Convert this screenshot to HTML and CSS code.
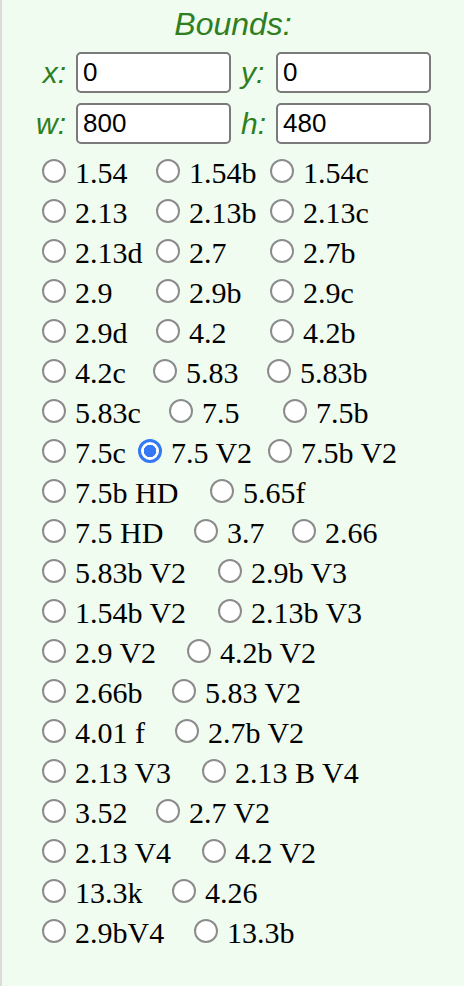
FILE: index.html
```html
<!DOCTYPE html>
<html lang="en">
    <head>
        <meta charset="UTF-8">
        <meta name="viewport" content="width=device-width, initial-scale=1.0">
        <title>Bounds</title>
        <link rel="stylesheet" href="styles.css">
    </head>
    <body>
        <div id="panel">
            <div id="title">Bounds:</div>
            <!-- bounds inputs -->
            <div id="bounds">
                <label for="bx" class="lbl">x:</label>
                <input type="text" id="bx" class="num" value="0">
                <label for="by" class="lbl">y:</label>
                <input type="text" id="by" class="num" value="0">
                <label for="bw" class="lbl">w:</label>
                <input type="text" id="bw" class="num" value="800">
                <label for="bh" class="lbl">h:</label>
                <input type="text" id="bh" class="num" value="480">
            </div>

            <!-- display list -->
            <div id="devs">
                <div class="row">
                    <label class="opt w114"><input type="radio" name="dev">1.54</label>
                    <label class="opt w114"><input type="radio" name="dev">1.54b</label>
                    <label class="opt"><input type="radio" name="dev">1.54c</label>
                </div>
                <div class="row">
                    <label class="opt w114"><input type="radio" name="dev">2.13</label>
                    <label class="opt w114"><input type="radio" name="dev">2.13b</label>
                    <label class="opt"><input type="radio" name="dev">2.13c</label>
                </div>
                <div class="row">
                    <label class="opt w114"><input type="radio" name="dev">2.13d</label>
                    <label class="opt w114"><input type="radio" name="dev">2.7</label>
                    <label class="opt"><input type="radio" name="dev">2.7b</label>
                </div>
                <div class="row">
                    <label class="opt w114"><input type="radio" name="dev">2.9</label>
                    <label class="opt w114"><input type="radio" name="dev">2.9b</label>
                    <label class="opt"><input type="radio" name="dev">2.9c</label>
                </div>
                <div class="row">
                    <label class="opt w114"><input type="radio" name="dev">2.9d</label>
                    <label class="opt w114"><input type="radio" name="dev">4.2</label>
                    <label class="opt"><input type="radio" name="dev">4.2b</label>
                </div>
                <div class="row">
                    <label class="opt w111"><input type="radio" name="dev">4.2c</label>
                    <label class="opt w114"><input type="radio" name="dev">5.83</label>
                    <label class="opt"><input type="radio" name="dev">5.83b</label>
                </div>
                <div class="row">
                    <label class="opt w127"><input type="radio" name="dev">5.83c</label>
                    <label class="opt w114"><input type="radio" name="dev">7.5</label>
                    <label class="opt"><input type="radio" name="dev">7.5b</label>
                </div>
                <div class="row">
                    <label class="opt w96"><input type="radio" name="dev">7.5c</label>
                    <label class="opt w130"><input type="radio" name="dev" checked>7.5 V2</label>
                    <label class="opt"><input type="radio" name="dev">7.5b V2</label>
                </div>
                <div class="row">
                    <label class="opt w168"><input type="radio" name="dev">7.5b HD</label>
                    <label class="opt"><input type="radio" name="dev">5.65f</label>
                </div>
                <div class="row">
                    <label class="opt w152"><input type="radio" name="dev">7.5 HD</label>
                    <label class="opt w98"><input type="radio" name="dev">3.7</label>
                    <label class="opt"><input type="radio" name="dev">2.66</label>
                </div>
                <div class="row">
                    <label class="opt w176"><input type="radio" name="dev">5.83b V2</label>
                    <label class="opt"><input type="radio" name="dev">2.9b V3</label>
                </div>
                <div class="row">
                    <label class="opt w176"><input type="radio" name="dev">1.54b V2</label>
                    <label class="opt"><input type="radio" name="dev">2.13b V3</label>
                </div>
                <div class="row">
                    <label class="opt w145"><input type="radio" name="dev">2.9 V2</label>
                    <label class="opt"><input type="radio" name="dev">4.2b V2</label>
                </div>
                <div class="row">
                    <label class="opt w130"><input type="radio" name="dev">2.66b</label>
                    <label class="opt"><input type="radio" name="dev">5.83 V2</label>
                </div>
                <div class="row">
                    <label class="opt w133"><input type="radio" name="dev">4.01 f</label>
                    <label class="opt"><input type="radio" name="dev">2.7b V2</label>
                </div>
                <div class="row">
                    <label class="opt w160"><input type="radio" name="dev">2.13 V3</label>
                    <label class="opt"><input type="radio" name="dev">2.13 B V4</label>
                </div>
                <div class="row">
                    <label class="opt w114"><input type="radio" name="dev">3.52</label>
                    <label class="opt"><input type="radio" name="dev">2.7 V2</label>
                </div>
                <div class="row">
                    <label class="opt w160"><input type="radio" name="dev">2.13 V4</label>
                    <label class="opt"><input type="radio" name="dev">4.2 V2</label>
                </div>
                <div class="row">
                    <label class="opt w130"><input type="radio" name="dev">13.3k</label>
                    <label class="opt"><input type="radio" name="dev">4.26</label>
                </div>
                <div class="row">
                    <label class="opt w152"><input type="radio" name="dev">2.9bV4</label>
                    <label class="opt"><input type="radio" name="dev">13.3b</label>
                </div>
            </div>
        </div>
    </body>
</html>
```

FILE: styles.css
```css
body {
    margin: 0;
    font-family: "Liberation Serif", "Times New Roman", serif;
}

#panel {
    min-height: 986px;
    box-sizing: border-box;
    background-color: #f0fcf0;
    border-left: 2px solid #dcdcdc;
}

#title {
    padding-top: 4px;
    height: 44px;
    line-height: 40px;
    text-align: center;
    font-family: "Liberation Sans", Arial, sans-serif;
    font-style: italic;
    font-size: 32px;
    color: #2f7f22;
    box-sizing: border-box;
}

#bounds {
    margin: 8px 0 0 34px;
    display: grid;
    grid-template-columns: 30px 155px 25px 155px;
    grid-auto-rows: 41px;
    column-gap: 10px;
    row-gap: 10px;
    align-items: center;
}

.lbl {
    font-family: "Liberation Sans", Arial, sans-serif;
    font-style: italic;
    font-size: 30px;
    line-height: 41px;
    color: #2f7f22;
    text-align: right;
}

.lbl:nth-of-type(even) {
    text-align: left;
}

.num {
    box-sizing: border-box;
    width: 155px;
    height: 41px;
    margin: 0;
    padding: 0 5px;
    font-family: "Liberation Sans", Arial, sans-serif;
    font-size: 26px;
    color: #000;
    background-color: #fff;
    border: 2px solid #7a7a7a;
    border-radius: 5px;
}

#devs {
    margin-top: 9px;
    padding-left: 40px;
}

.row {
    display: flex;
    height: 40px;
    white-space: nowrap;
}

.opt {
    display: block;
    font-size: 30px;
    line-height: 40px;
    color: #000;
}

.opt input {
    -webkit-appearance: none;
    appearance: none;
    box-sizing: border-box;
    width: 24px;
    height: 24px;
    margin: 0 9px 0 0;
    border: 2px solid #8c8c8c;
    border-radius: 50%;
    background-color: #fff;
}

.opt input:checked {
    border: 3px solid #3478f6;
    background: radial-gradient(circle, #3478f6 0 6px, #fff 6.5px);
}

.w96 { width: 96px; }
.w98 { width: 98px; }
.w111 { width: 111px; }
.w114 { width: 114px; }
.w127 { width: 127px; }
.w130 { width: 130px; }
.w133 { width: 133px; }
.w145 { width: 145px; }
.w152 { width: 152px; }
.w160 { width: 160px; }
.w168 { width: 168px; }
.w176 { width: 176px; }
```
